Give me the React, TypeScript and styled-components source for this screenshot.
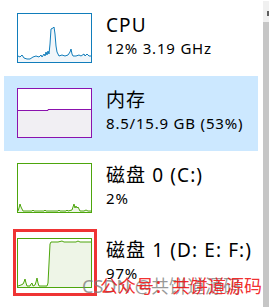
import React from 'react';
import styled, { createGlobalStyle } from 'styled-components';

const GlobalStyle = createGlobalStyle`
  html, body {
    margin: 0;
    padding: 0;
    background: #fff;
  }
  body {
    font-family: "Noto Sans", "Noto Sans CJK SC", sans-serif;
    color: #000;
  }
`;

interface Perf {
  id: string;
  title: string;
  detail: string;
  color: string;
  fill: string;
  line: string; // polyline points in a 73x48 box
  selected?: boolean;
  marked?: boolean;
}

const perfItems: Perf[] = [
  {
    id: 'cpu',
    title: 'CPU',
    detail: '12% 3.19 GHz',
    color: '#117dbb',
    fill: '#f1f6fa',
    line:
      '0,42 2,43 4,41 6,44 9,45 12,45 15,43 18,42 21,43 23,41 24,43 26,40 27,42 28,38 29,41 30,37 31,40 32,30 33,15 35,14 36,13 37,20 38,32 39,38 41,42 44,41 47,42 50,41 52,38 53,35 54,40 55,42 58,42 61,41 63,42 66,40 67,42 69,40 71,42 73,42',
  },
  {
    id: 'mem',
    title: '内存',
    detail: '8.5/15.9 GB (53%)',
    color: '#8b12ae',
    fill: '#f1eff3',
    line: '0,21.5 30,21.5 30,20.5 73,20.5',
    selected: true,
  },
  {
    id: 'disk0',
    title: '磁盘 0 (C:)',
    detail: '2%',
    color: '#4da60c',
    fill: '#eef5e7',
    line:
      '0,47 1,44 2,40 3,43 4,45 5,47 14,47 15,46 16,47 26,47 27,46 28,47 40,47 41,46 42,47 48,47 49,46 50,47 54,46 55,43 56,40 57,44 58,42 59,44 60,43 61,45 62,47 66,47 68,46 70,47 73,47',
  },
  {
    id: 'disk1',
    title: '磁盘 1 (D: E: F:)',
    detail: '97%',
    color: '#4da60c',
    fill: '#eef5e7',
    line:
      '0,47 3,46 5,45 6,43 7,40 8,44 9,47 12,47 13,45 14,44 15,47 17,46 18,43 19,39 20,44 21,47 29,47 30,44 32,5 33,3 40,3 44,2 46,3 58,3 60,2 62,3 73,3',
    marked: true,
  },
];

const Page = styled.div`
  position: relative;
  display: flex;
  width: 269px;
  height: 307px;
  overflow: hidden;
`;

const List = styled.div`
  flex: 1;
  display: flex;
  flex-direction: column;
  padding: 1px 5px 0 4px;
`;

const Row = styled.div<{ $selected?: boolean }>`
  display: flex;
  gap: 14px;
  height: 75px;
  padding: 12px 0 0 13px;
  box-sizing: border-box;
  background: ${(p) => (p.$selected ? '#cce8ff' : 'transparent')};
`;

const GraphBox = styled.div<{ $color: string }>`
  position: relative;
  width: 75px;
  height: 50px;
  box-sizing: border-box;
  border: 1px solid ${(p) => p.$color};
  background: #fff;
  flex-shrink: 0;
`;

const Marker = styled.div`
  position: absolute;
  top: -10px;
  left: -5px;
  right: -6px;
  bottom: -9px;
  border: 3px solid #ef3434;
`;

const Info = styled.div`
  display: flex;
  flex-direction: column;
  white-space: nowrap;
`;

const Title = styled.div`
  font-size: 19px;
  line-height: 24px;
  letter-spacing: 1.1px;
`;

const Detail = styled.div`
  margin-top: 2px;
  font-size: 15px;
  line-height: 18px;
  letter-spacing: 0.8px;
`;

const Scrollbar = styled.div`
  width: 6px;
  display: flex;
  flex-direction: column;
  padding-top: 1px;
`;

const ScrollButton = styled.div`
  position: relative;
  height: 21px;
  background: #f0f0f0;

  &::after {
    content: '';
    position: absolute;
    right: 0;
    top: 10px;
    width: 2px;
    height: 5px;
    background: #606060;
  }
`;

const ScrollThumb = styled.div`
  flex: 1;
  background: #c6c6c6;
`;

const Watermark = styled.div`
  position: absolute;
  top: 274px;
  left: 82px;
  font-size: 18px;
  line-height: 24px;
  white-space: nowrap;
  pointer-events: none;
`;

const WaterGrey = styled.span`
  color: rgba(120, 120, 120, 0.75);
`;

const WaterRed = styled.span`
  position: absolute;
  left: 18px;
  top: 0;
  color: rgba(240, 20, 20, 0.9);
`;

const Graph: React.FC<{ item: Perf }> = ({ item }) => (
  <GraphBox $color={item.color}>
    <svg width="73" height="48" viewBox="0 0 73 48" style={{ display: 'block' }}>
      <polygon points={`0,48 ${item.line} 73,48`} fill={item.fill} />
      <polyline points={item.line} fill="none" stroke={item.color} strokeWidth="1" />
    </svg>
    {item.marked && <Marker />}
  </GraphBox>
);

const App: React.FC = () => (
  <>
    <GlobalStyle />
    <Page>
      <List>
        {perfItems.map((item) => (
          <Row key={item.id} $selected={item.selected}>
            <Graph item={item} />
            <Info>
              <Title>{item.title}</Title>
              <Detail>{item.detail}</Detail>
            </Info>
          </Row>
        ))}
      </List>
      <Scrollbar>
        <ScrollButton />
        <ScrollThumb />
      </Scrollbar>
      <Watermark>
        <WaterGrey>CSDN @共饼道源码</WaterGrey>
        <WaterRed>公众号：共饼道源码</WaterRed>
      </Watermark>
    </Page>
  </>
);

export default App;
